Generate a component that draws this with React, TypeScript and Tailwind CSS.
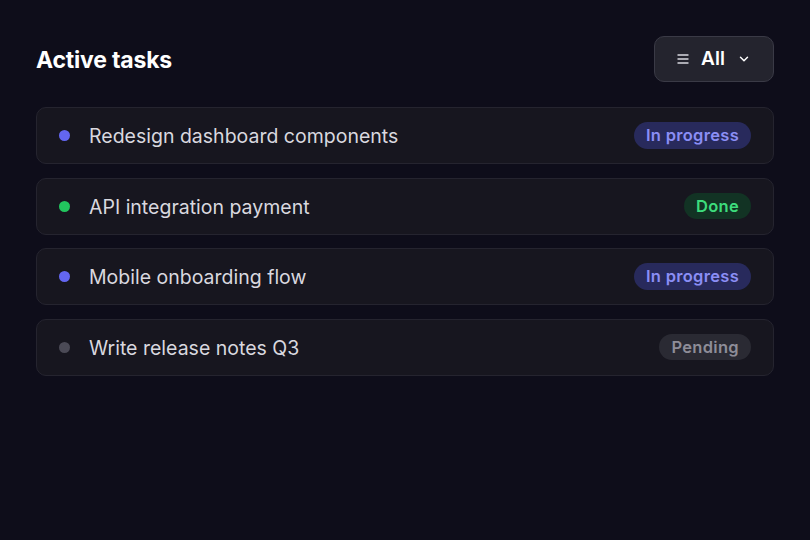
import { ChevronDown } from 'lucide-react';

type Status = 'progress' | 'done' | 'pending';

const tasks: { title: string; status: Status }[] = [
  { title: 'Redesign dashboard components', status: 'progress' },
  { title: 'API integration payment', status: 'done' },
  { title: 'Mobile onboarding flow', status: 'progress' },
  { title: 'Write release notes Q3', status: 'pending' },
];

const styles = {
  progress: { dot: 'bg-[#6366f1]', badge: 'bg-[#282a5c] text-[#8b8ef5]', label: 'In progress' },
  done: { dot: 'bg-[#22c55e]', badge: 'bg-[#123324] text-[#3ddc7c]', label: 'Done' },
  pending: { dot: 'bg-[#4b4a56]', badge: 'bg-[#2a2a33] text-[#8e8d98]', label: 'Pending' },
};

export default function App() {
  return (
    <div
      className="min-h-[540px] w-full bg-[#0e0d1a] px-[36px] pt-[36px]"
      style={{ fontFamily: 'Inter, "Noto Sans", sans-serif' }}
    >
      <div className="flex items-center justify-between">
        <h1 className="pt-[3px] text-[23px] font-bold tracking-[-0.2px] text-white">Active tasks</h1>
        <button className="flex h-[46px] w-[120px] items-center justify-center gap-[12px] rounded-[10px] border border-[#3a3a46] bg-[#24242e] text-white">
          <svg width="12" height="12" viewBox="0 0 12 12" className="text-[#d8d8e0]">
            <path d="M1 2h10M1 6h10M1 10h10" stroke="currentColor" strokeWidth="1.4" strokeLinecap="round" />
          </svg>
          <span className="pt-[1px] text-[19px] font-semibold">All</span>
          <ChevronDown className="h-[14px] w-[14px]" strokeWidth={2.5} />
        </button>
      </div>

      <div className="mt-[25px] flex flex-col gap-[13.5px]">
        {tasks.map((t) => {
          const s = styles[t.status];
          return (
            <div
              key={t.title}
              className="flex h-[57px] items-center rounded-[10px] border border-[#25242f] bg-[#17161f] pl-[22px] pr-[22px]"
            >
              <span className={`h-[11px] w-[11px] rounded-full ${s.dot}`} />
              <span className="ml-[19px] flex-1 pt-[3px] text-[19.5px] text-[#d9d8df]">{t.title}</span>
              <span className={`rounded-full px-[12px] py-[1px] text-[16.5px] font-semibold tracking-[0.3px] ${s.badge}`}>
                {s.label}
              </span>
            </div>
          );
        })}
      </div>
    </div>
  );
}
